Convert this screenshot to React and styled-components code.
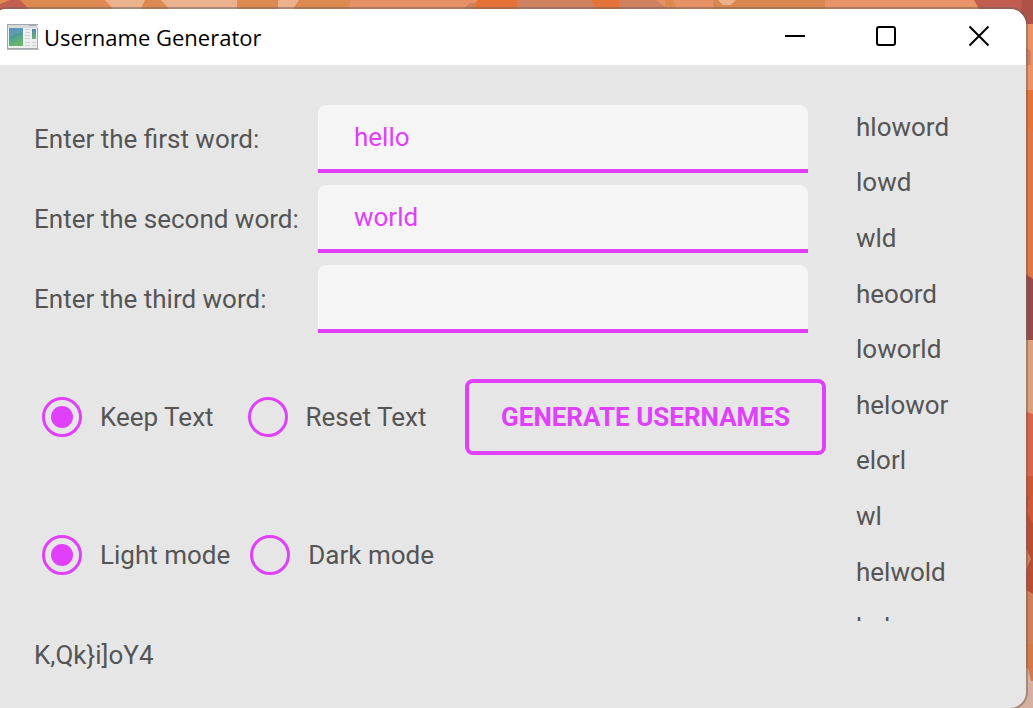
import React, { useState } from "react";
import styled, { createGlobalStyle } from "styled-components";

const accent = "#e040fb";
const ink = "#555555";

const GlobalStyle = createGlobalStyle`
  *, *::before, *::after { box-sizing: border-box; }
  html, body { margin: 0; }
  body {
    font-family: Roboto, "Liberation Sans", sans-serif;
    font-size: 26px;
    line-height: 30px;
    color: ${ink};
    background: #d9874f;
  }
`;

const Desktop = styled.div`
  position: relative;
  display: flex;
  min-height: 100vh;
  padding: 9px 7px 0 0;
  overflow: hidden;
`;

const WallpaperArt = styled.svg`
  position: absolute;
  inset: 0;
  width: 100%;
  height: 100%;
`;

const Window = styled.main`
  position: relative;
  flex: 1;
  min-width: 0;
  display: flex;
  flex-direction: column;
  overflow: hidden;
  background: #e6e6e6;
  border-radius: 8px 16px 16px 0 / 2px 16px 16px 0;
  box-shadow: 0 0 0 2px rgba(110, 100, 90, 0.5);
`;

const TitleBar = styled.header`
  display: flex;
  align-items: center;
  height: 56px;
  padding: 0 1px 0 7px;
  background: #ffffff;
  color: #000000;
`;

const Title = styled.h1`
  flex: 1;
  margin: 0 0 0 5px;
  font: 400 22px/32px "Open Sans", "Noto Sans", sans-serif;
`;

const WindowButton = styled.button`
  display: grid;
  place-items: center;
  width: 92px;
  height: 56px;
  padding: 0 0 2px;
  border: 0;
  background: transparent;
  color: #000000;
`;

const Content = styled.div`
  flex: 1;
  display: grid;
  grid-template-columns: minmax(0, 1fr) 170px;
  column-gap: 30px;
  padding: 34px 0 0 34px;
`;

const Form = styled.form`
  display: flex;
  flex-direction: column;
  padding-top: 6px;
`;

const Fields = styled.div`
  display: flex;
  flex-direction: column;
  gap: 12px;
  padding-right: 18px;
`;

const Field = styled.label`
  display: grid;
  grid-template-columns: 264px minmax(0, 1fr);
  column-gap: 20px;
  align-items: center;
  white-space: nowrap;
`;

const TextInput = styled.input`
  width: 100%;
  height: 68px;
  padding: 0 36px;
  border: 0;
  border-bottom: 4px solid ${accent};
  border-radius: 8px 8px 0 0;
  outline: 0;
  background: #f5f5f5;
  color: ${accent};
  font: inherit;
`;

const ActionRow = styled.div`
  display: flex;
  align-items: center;
  justify-content: space-between;
  margin-top: 46px;
`;

const RadioGroup = styled.div`
  display: flex;
  gap: ${(p) => p.$gap}px;
  padding-left: 8px;
  margin-top: ${(p) => p.$top || 0}px;
`;

const RadioLabel = styled.label`
  display: flex;
  align-items: center;
  gap: 18px;
  height: 40px;
  white-space: nowrap;
`;

const Radio = styled.input`
  appearance: none;
  display: grid;
  place-items: center;
  width: 40px;
  height: 40px;
  margin: 0;
  border: 3px solid ${accent};
  border-radius: 50%;

  &:checked::before {
    content: "";
    width: 22px;
    height: 22px;
    border-radius: 50%;
    background: ${accent};
  }
`;

const GenerateButton = styled.button`
  height: 76px;
  padding: 0 32px;
  border: 4px solid ${accent};
  border-radius: 8px;
  background: transparent;
  color: ${accent};
  font: inherit;
  font-weight: 700;
  white-space: nowrap;
`;

const Password = styled.output`
  margin-top: 65px;
`;

const NameViewport = styled.div`
  height: 522px;
  overflow: hidden;
`;

const NameList = styled.ul`
  display: grid;
  grid-auto-rows: 1fr;
  align-items: center;
  height: 556px;
  margin: 0;
  padding: 0;
  list-style: none;
`;

const names = [
  "hloword", "lowd", "wld", "heoord", "loworld",
  "helowor", "elorl", "wl", "helwold", "helwo",
];

const wordFields = [
  ["Enter the first word:", "hello"],
  ["Enter the second word:", "world"],
  ["Enter the third word:", ""],
];

function Wallpaper() {
  return (
    <WallpaperArt viewBox="0 0 1033 708" preserveAspectRatio="none" aria-hidden="true">
      <rect width="1033" height="708" fill="#de8950" />
      <path d="M0 4L10 0H20L30 10V20H0Z" fill="#c35f50" />
      <path d="M105 0H145L141 9H113Z" fill="#ebb08c" />
      <path d="M161 0H237V9H169Z" fill="#ebb08c" />
      <path d="M278 0H299L293 9H278Z" fill="#ebb08c" />
      <path d="M351 0H478L464 9H348Z" fill="#e89167" />
      <path d="M478 0H517V9H473Z" fill="#e57236" />
      <path d="M463 9L470 3H476L473 9Z" fill="#cf805e" />
      <path d="M517 0H591L597 9H517Z" fill="#cf805e" />
      <path d="M591 0H619V9H597Z" fill="#e57236" />
      <path d="M619 0H665V9H619Z" fill="#cf805e" />
      <path d="M656 0H714V9H678L673 0H665V7Z" fill="#e89167" />
      <path d="M713 0H825V9H713Z" fill="#d9874f" />
      <path d="M718 0H736L731 5H723Z" fill="#ebb08c" />
      <path d="M825 0H975L980 9H825Z" fill="#eb9368" />
      <path d="M974 0H1033V30H1000L979 9Z" fill="#c15c50" />
      <path d="M1022 0H1033V25H1020Z" fill="#ae5148" />
      <path d="M1024 24H1033V92H1024Z" fill="#eb9368" />
      <path d="M1024 47L1031 51V65H1024Z" fill="#cf805e" />
      <path d="M1024 90H1033V133L1024 124Z" fill="#e57236" />
      <path d="M1024 124L1033 133V280H1024Z" fill="#dd7846" />
      <path d="M1024 273L1033 279V340H1024Z" fill="#944c48" />
      <path d="M1024 340H1033V414H1024Z" fill="#d9a27d" />
      <path d="M1024 411L1033 414V478H1024Z" fill="#d8664b" />
      <path d="M1024 476H1033V524H1024Z" fill="#cb5638" />
      <path d="M1024 494L1032 500L1026 510L1033 524V594L1024 589Z" fill="#b64d36" />
      <path d="M1028 500L1033 494V523Q1027 517 1028 500Z" fill="#cf5839" />
      <path d="M1026 548L1031 559L1026 570Z" fill="#d07e59" />
      <path d="M1024 589L1033 594V646H1024Z" fill="#cf805a" />
      <path d="M1024 644H1033V682H1024Z" fill="#d3784a" />
      <path d="M1020 666L1028 668L1031 681H1033V708H1012Z" fill="#d5afa0" />
    </WallpaperArt>
  );
}

function AppIcon() {
  return (
    <svg width="32" height="26" viewBox="0 0 32 26" aria-hidden="true">
      <defs>
        <linearGradient id="pane" x1="0" y1="0" x2="0.3" y2="1">
          <stop offset="0" stopColor="#527fb8" />
          <stop offset="0.5" stopColor="#509c98" />
          <stop offset="1" stopColor="#67b66d" />
        </linearGradient>
      </defs>
      <rect x="0.5" y="0.5" width="30" height="24" fill="#eeeff1" stroke="#a2a7ad" />
      <path d="M1 2.5H31" stroke="#d6dade" strokeWidth="3" />
      <path d="M22 1.5H29" stroke="#a3adb7" />
      <rect x="2" y="4" width="14" height="18" fill="url(#pane)" />
      <path d="M2 14Q7 9 16 8V4H2Z" fill="#78a7cb" opacity="0.4" />
      <path d="M18 5.5H23M18 8.5H23M18 11.5H23M18 14.5H23M18 18.5H23M18 21.5H23M25 18.5H29M25 21.5H29" stroke="#cdd0d3" />
      <rect x="25" y="5" width="4" height="10" fill="url(#pane)" />
      <path d="M0 25.5H32" stroke="#b7b9bc" />
    </svg>
  );
}

function ControlIcon({ children }) {
  return (
    <svg width="22" height="22" viewBox="0 0 22 22" fill="none" stroke="currentColor" strokeWidth="2" aria-hidden="true">
      {children}
    </svg>
  );
}

function RadioOption({ name, label, value, onChange }) {
  return (
    <RadioLabel>
      <Radio type="radio" name={name} checked={value === label} onChange={() => onChange(label)} />
      {label}
    </RadioLabel>
  );
}

export default function App() {
  const [textAction, setTextAction] = useState("Keep Text");
  const [mode, setMode] = useState("Light mode");

  return (
    <>
      <GlobalStyle />
      <Desktop>
        <Wallpaper />
        <Window>
          <TitleBar>
            <AppIcon />
            <Title>Username Generator</Title>
            <WindowButton type="button" aria-label="Minimize">
              <ControlIcon><path d="M1 11H21" /></ControlIcon>
            </WindowButton>
            <WindowButton type="button" aria-label="Maximize">
              <ControlIcon><rect x="1" y="2" width="18" height="18" rx="2" /></ControlIcon>
            </WindowButton>
            <WindowButton type="button" aria-label="Close">
              <ControlIcon><path d="M1.5 1.5L20.5 20.5M20.5 1.5L1.5 20.5" /></ControlIcon>
            </WindowButton>
          </TitleBar>
          <Content>
            <Form onSubmit={(e) => e.preventDefault()}>
              <Fields>
                {wordFields.map(([label, word]) => (
                  <Field key={label}>
                    {label}
                    <TextInput type="text" defaultValue={word} />
                  </Field>
                ))}
              </Fields>
              <ActionRow>
                <RadioGroup $gap={34}>
                  <RadioOption name="text" label="Keep Text" value={textAction} onChange={setTextAction} />
                  <RadioOption name="text" label="Reset Text" value={textAction} onChange={setTextAction} />
                </RadioGroup>
                <GenerateButton type="submit">GENERATE USERNAMES</GenerateButton>
              </ActionRow>
              <RadioGroup $gap={20} $top={80}>
                <RadioOption name="mode" label="Light mode" value={mode} onChange={setMode} />
                <RadioOption name="mode" label="Dark mode" value={mode} onChange={setMode} />
              </RadioGroup>
              <Password>{"K,Qk}i]oY4"}</Password>
            </Form>
            <NameViewport>
              <NameList>
                {names.map((name) => (
                  <li key={name}>{name}</li>
                ))}
              </NameList>
            </NameViewport>
          </Content>
        </Window>
      </Desktop>
    </>
  );
}
